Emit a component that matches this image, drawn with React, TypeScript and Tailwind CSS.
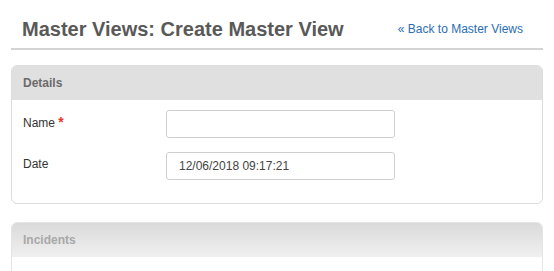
const App = () => {
    return (
        <div className="w-[554px] min-h-[271px] bg-white px-[11px] font-['Liberation_Sans',Arial,sans-serif] overflow-hidden h-[271px]">
            <div className="flex items-center justify-between h-[50px] pt-[10px] px-[11px] border-b-2 border-[#d4d4d4]">
                <h1 className="text-[20px] font-bold text-[#595959] leading-none">
                    Master Views: Create Master View
                </h1>
                <a href="#" className="text-[12px] text-[#2a6db5] mr-[9px] leading-none">
                    « Back to Master Views
                </a>
            </div>

            <section className="mt-[15px] border border-[#dcdcdc] rounded-[6px] overflow-hidden">
                <div className="h-[34px] bg-[#e0e0e0] flex items-center px-[11px]">
                    <span className="text-[12px] font-bold text-[#6b6b6b]">Details</span>
                </div>
                <div className="px-[11px] pt-[10px] pb-[23px] flex flex-col gap-[14px]">
                    <div className="flex items-center">
                        <label className="w-[143px] text-[12px] text-[#333] -mt-[4px]">
                            Name <span className="text-[#e0382f] text-[14px] font-bold">*</span>
                        </label>
                        <input className="w-[229px] h-[28px] border border-[#cfcfcf] rounded-[3px] px-[12px] text-[12px] text-[#444] outline-none" />
                    </div>
                    <div className="flex items-center">
                        <label className="w-[143px] text-[12px] text-[#333] -mt-[4px]">Date</label>
                        <input
                            defaultValue="12/06/2018 09:17:21"
                            className="w-[229px] h-[28px] border border-[#cfcfcf] rounded-[3px] px-[12px] text-[12px] text-[#444] outline-none"
                        />
                    </div>
                </div>
            </section>

            <section className="mt-[18px] border border-[#e4e4e4] rounded-t-[6px] overflow-hidden h-[60px]">
                <div className="h-[34px] bg-gradient-to-b from-[#dadada] to-[#f0f0f0] flex items-center px-[11px]">
                    <span className="text-[12px] font-bold text-[#a8a8a8]">Incidents</span>
                </div>
            </section>
        </div>
    );
};

export default App;
